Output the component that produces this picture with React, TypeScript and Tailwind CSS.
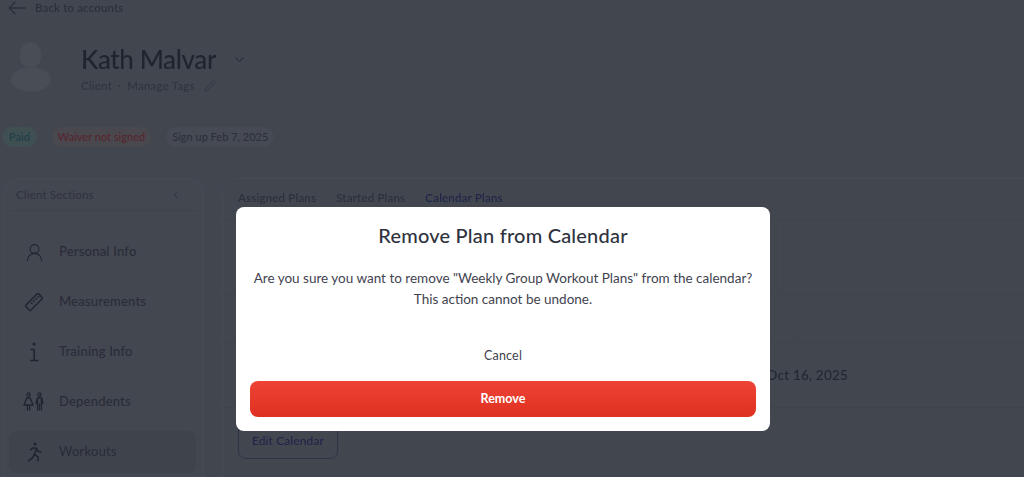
import { ChevronDown, ChevronLeft, Pencil, UserRound } from "lucide-react"
import { ReactNode } from "react"

function BackArrow() {
    return (
        <svg width="18" height="14" viewBox="0 0 18 14" fill="none" stroke="currentColor" strokeWidth="1.3">
            <path d="M17.5 7H1.2M7.2 1L1.2 7l6 6" />
        </svg>
    )
}

function Ruler() {
    return (
        <svg width="20" height="20" viewBox="0 0 20 20" fill="none" stroke="currentColor" strokeWidth="1.4">
            <rect x="-9" y="-3.5" width="18" height="7" rx="1" transform="translate(10 10) rotate(-45)" />
            <path d="M7 10.5l1.5 1.5M9.2 8.3l1.5 1.5M11.4 6.1l1.5 1.5M13.6 3.9l1.5 1.5" />
        </svg>
    )
}

function InfoI() {
    return (
        <svg width="14" height="22" viewBox="0 0 14 22" fill="none" stroke="currentColor" strokeWidth="1.5">
            <circle cx="7" cy="3" r="0.8" />
            <path d="M3.5 8.5H7.2V19.5M3 19.5H11.5" />
        </svg>
    )
}

function Kids() {
    return (
        <svg width="22" height="20" viewBox="0 0 22 20" fill="none" stroke="currentColor" strokeWidth="1.3">
            <circle cx="5.5" cy="2.5" r="1.6" />
            <circle cx="16.5" cy="2.5" r="1.6" />
            <path d="M3.8 6h3.4L10 13H1zM4.4 13v5.5M6.6 13v5.5" />
            <path d="M14.2 6h4.6l1.2 6M14.2 6L13 12M14.6 6v12.5M18.4 6v12.5M16.5 11.5v7" />
        </svg>
    )
}

function Runner() {
    return (
        <svg width="18" height="21" viewBox="0 0 18 21" fill="none" stroke="currentColor" strokeWidth="1.5">
            <circle cx="10" cy="2" r="1.5" fill="currentColor" stroke="none" />
            <path d="M5 8l3.5-2.3 3 .6-2 6 3.5 2.5v4.5M9.2 12.5l-1.6 3.2L3 19.5M11.5 6.5l1.5 2.8 3.3.7" />
        </svg>
    )
}

function NavRow({ icon, label, active }: { icon: ReactNode; label: string; active?: boolean }) {
    return (
        <li className={`flex items-center rounded-lg ${active ? "mt-[4px] h-[42px] bg-[#3f434c]" : "h-[50px]"}`}>
            <span className="flex w-[50px] justify-center text-[#20242f]">{icon}</span>
            <span className="text-[13px] font-medium tracking-[0.2px] text-[#292d39]">{label}</span>
        </li>
    )
}

export default function App() {
    return (
        <div className="relative h-[477px] w-[1024px] overflow-hidden bg-[#42464f] font-['Lato',sans-serif]">
            <div className="flex h-full flex-col blur-[0.4px]">
                <div className="flex h-4 items-center gap-[9px] pl-2 text-[#2b2f3b]">
                    <BackArrow />
                    <span className="text-[11.5px] font-medium tracking-[0.15px]">Back to accounts</span>
                </div>

                <div className="mt-[26px] flex h-[56px] pl-[10px]">
                    <div className="flex w-[41px] flex-col items-center">
                        <div className="h-[26px] w-[21px] rounded-full bg-[#494d56]" />
                        <div className="-mt-[1px] h-[25px] w-[40px] rounded-[50%] bg-[#494d56]" />
                    </div>
                    <div className="ml-[30px] flex flex-col">
                        <div className="flex h-[34px] items-center">
                            <span className="text-[26px] font-medium tracking-[-0.4px] text-[#20242f]">Kath Malvar</span>
                            <ChevronDown size={15} strokeWidth={1.6} className="ml-[16px] text-[#20242f]" />
                        </div>
                        <div className="mt-[1px] flex items-center text-[11.5px] font-medium tracking-[0.2px] text-[#30343f]">
                            <span>Client</span>
                            <span className="mx-[6px]">·</span>
                            <span>Manage Tags</span>
                            <Pencil size={12} strokeWidth={1.4} className="ml-[9px]" />
                        </div>
                    </div>
                </div>

                <div className="mt-[29px] flex h-5 items-center gap-[15px] pl-[2px] text-[11px] font-medium">
                    <span className="flex h-5 items-center rounded-full bg-[#405052] px-[7px] text-[#1d3f48]">Paid</span>
                    <span className="flex h-5 items-center rounded-full bg-[#4a484f] px-[6px] text-[#57252d]">Waiver not signed</span>
                    <span className="flex h-5 items-center rounded-full bg-[#464a53] px-[6px] text-[#2c303d]">Sign up Feb 7, 2025</span>
                </div>

                <div className="mt-[31px] flex min-h-0 flex-1 gap-[18px] pl-[3px]">
                    <aside className="w-[201px] rounded-t-2xl border border-b-0 border-[#474b54] bg-[#434750]">
                        <div className="mx-[5px] flex h-[32px] items-center justify-between border-b border-[#3f434c] pl-[7px] pr-[15px] text-[#30343f]">
                            <span className="text-[11.5px] font-medium tracking-[0.15px]">Client Sections</span>
                            <ChevronLeft size={14} strokeWidth={1.5} />
                        </div>
                        <ul className="ml-[5px] mr-[7px] mt-[16px]">
                            <NavRow icon={<UserRound size={21} strokeWidth={1.2} />} label="Personal Info" />
                            <NavRow icon={<Ruler />} label="Measurements" />
                            <NavRow icon={<InfoI />} label="Training Info" />
                            <NavRow icon={<Kids />} label="Dependents" />
                            <NavRow icon={<Runner />} label="Workouts" active />
                        </ul>
                    </aside>

                    <main className="flex-1 rounded-tl-2xl border border-r-0 border-b-0 border-[#474b54]">
                        <div className="flex h-[42px] items-center gap-[20px] border-b border-[#3f434c] pb-[4px] pl-[15px] text-[11.5px] font-medium tracking-[0.2px]">
                            <span className="text-[#2b2f3b]">Assigned Plans</span>
                            <span className="text-[#2b2f3b]">Started Plans</span>
                            <span className="text-[#20244a]">Calendar Plans</span>
                        </div>
                        <div className="h-[74px] border-b border-[#3f434c]">
                            <div className="h-full w-[561px] border-r border-[#40444d]" />
                        </div>
                        <div className="h-[48px] border-b border-[#3f434c]">
                            <div className="h-full w-[576px] border-r border-[#40444d]" />
                        </div>
                        <div className="flex h-[65px] items-center justify-end border-b border-[#3f434c] pr-[176px] text-[13.5px] font-medium tracking-[0.2px] text-[#232733]">
                            Oct 16, 2025
                        </div>
                        <button className="ml-[15px] mt-[15px] h-[36px] w-[100px] rounded-lg border border-[#2f3348] text-[12px] font-medium tracking-[0.1px] text-[#20244a]">
                            Edit Calendar
                        </button>
                    </main>
                </div>
            </div>

            <div className="absolute left-[236px] top-[207px] flex h-[224px] w-[534px] flex-col items-center rounded-lg bg-white px-[14px]">
                <h2 className="mt-[15px] text-[20px] leading-[26px] font-medium tracking-[0.2px] text-[#2f3340]">Remove Plan from Calendar</h2>
                <p className="mt-[20px] whitespace-nowrap text-center text-[13.5px] leading-[21px] text-[#3f4350]">
                    Are you sure you want to remove "Weekly Group Workout Plans" from the calendar?
                    <br />
                    This action cannot be undone.
                </p>
                <button className="mt-[37px] text-[12.5px] leading-[18px] tracking-[0.2px] text-[#3f4350]">Cancel</button>
                <button className="mt-[16px] h-[36px] w-full rounded-lg bg-gradient-to-b from-[#ee4335] to-[#df3020] text-[12.5px] font-bold text-white">
                    Remove
                </button>
            </div>
        </div>
    )
}
